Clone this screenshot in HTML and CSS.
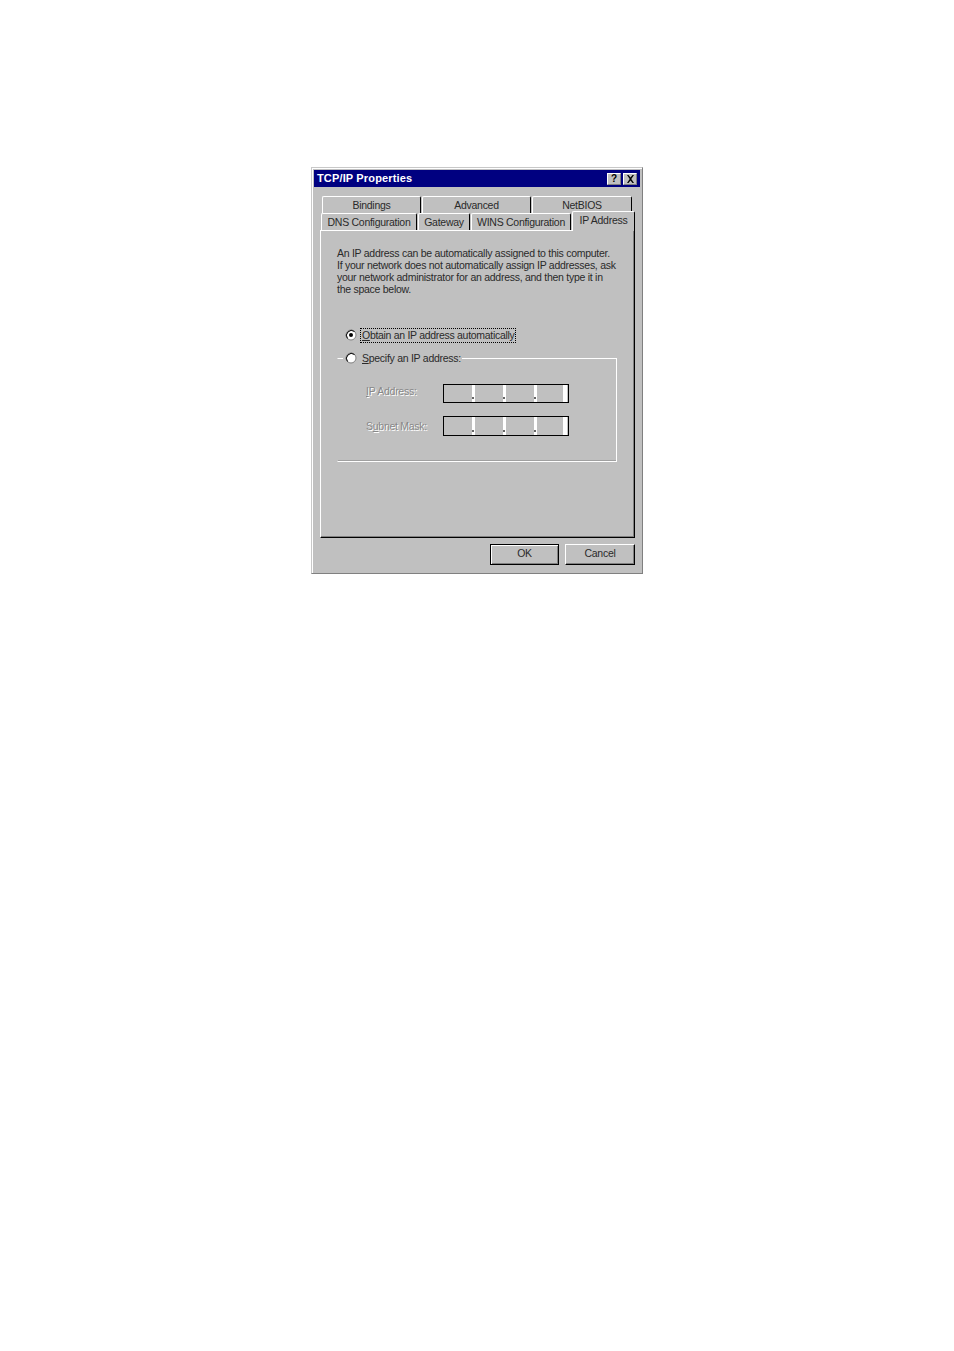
FILE: index.html
```html
<!DOCTYPE html>
<html lang="en">
<head>
<meta charset="utf-8">
<title>TCP/IP Properties</title>
<link rel="stylesheet" href="styles.css">
</head>
<body>
<div class="dialog">
  <div class="titlebar">
    <span class="title">TCP/IP Properties</span>
    <span class="tb-btn help">?</span>
    <span class="tb-btn close"><svg width="9" height="8" viewBox="0 0 9 8"><path d="M1 0h1.500L4.500 2.500 6.500 0H8L5.300 4 8 8H6.500L4.500 5.500 2.500 8H1L3.700 4z" fill="#000"/></svg></span>
  </div>
  <div class="tabs">
    <div class="tab-row rear">
      <div class="tab w-bind">Bindings</div>
      <div class="tab w-adv">Advanced</div>
      <div class="tab w-net">NetBIOS</div>
    </div>
    <div class="tab-row front">
      <div class="tab w-dns">DNS Configuration</div>
      <div class="tab w-gw">Gateway</div>
      <div class="tab w-wins">WINS Configuration</div>
      <div class="tab active">IP Address</div>
    </div>
  </div>
  <div class="panel">
    <p class="intro">An IP address can be automatically assigned to this computer.<br>If your network does not automatically assign IP addresses, ask<br>your network administrator for an address, and then type it in<br>the space below.</p>
    <div class="radio-row first">
      <svg class="radio" width="12" height="12" viewBox="0 0 12 12"><circle cx="6" cy="6" r="5" fill="#fff" stroke="#808080"/><path d="M2.500 9.500A5 5 0 0 1 9.500 2.500" fill="none" stroke="#000"/><circle cx="6" cy="6" r="2" fill="#000"/></svg>
      <span class="focus"><u>O</u>btain an IP address automatically</span>
    </div>
    <fieldset class="group">
      <legend class="radio-row">
        <svg class="radio" width="12" height="12" viewBox="0 0 12 12"><circle cx="6" cy="6" r="5" fill="#fff" stroke="#808080"/><path d="M2.500 9.500A5 5 0 0 1 9.500 2.500" fill="none" stroke="#000"/></svg>
        <span class="legend-text"><u>S</u>pecify an IP address:</span>
      </legend>
      <div class="field first-field">
        <span class="label raised"><u>I</u>P Address:</span>
        <div class="ip"><span class="seg"><i></i></span><span class="seg"><i></i></span><span class="seg"><i></i></span><span class="seg last"></span></div>
      </div>
      <div class="field">
        <span class="label"><span>S<u>u</u>bnet Mask:</span></span>
        <div class="ip tall"><span class="seg"><i></i></span><span class="seg"><i></i></span><span class="seg"><i></i></span><span class="seg last"></span></div>
      </div>
    </fieldset>
  </div>
  <div class="buttons">
    <button class="btn default">OK</button>
    <button class="btn cancel">Cancel</button>
  </div>
</div>
</body>
</html>
```

FILE: styles.css
```css
html, body { margin: 0; padding: 0; background: #fff; }
body { height: 1351px; overflow: hidden; font-family: "Liberation Sans", Arial, sans-serif; font-size: 10.5px; letter-spacing: -0.27px; color: #2a2a2a; }
.dialog {
  box-sizing: border-box;
  width: 332px;
  height: 407px;
  margin: 167px 0 0 311px;
  background: #c0c0c0;
  border: 1px solid #808080;
  border-top-color: #c8c8c8;
  border-left-color: #c8c8c8;
  box-shadow: inset 1px 1px 0 #fff;
  padding: 2px 2px 0 2px;
}
.titlebar {
  height: 17px;
  background: #000080;
  display: flex;
  align-items: center;
  gap: 2px;
  padding: 0 3px 0 3px;
}
.title { flex: 1; color: #fff; font-weight: bold; font-size: 11px; letter-spacing: 0.15px; margin-top: -1px; }
.tb-btn {
  box-sizing: border-box;
  width: 14px; height: 12px;
  background: #c0c0c0;
  border: 1px solid #808080;
  border-top-color: #fff; border-left-color: #fff;
  display: flex; align-items: center; justify-content: center;
  font-weight: bold; font-size: 10px; color: #000; line-height: 1;
}
.tabs { margin: 9px -1px 0 -1px; height: 34px; display: flex; flex-direction: column; }
.tab-row { display: flex; height: 17px; }
.rear { padding-left: 9px; gap: 1px; }
.front { padding-left: 8px; gap: 1px; }
.tab {
  box-sizing: border-box;
  height: 17px;
  border-top: 1px solid #fff;
  border-left: 1px solid #fff;
  border-right: 1px solid #000;
  border-radius: 2px 2px 0 0;
  text-align: center;
  line-height: 16px;
}
.w-bind { width: 99px; }
.w-adv { width: 109px; }
.w-net { width: 100px; }
.w-dns { width: 96px; }
.w-gw { width: 52px; }
.w-wins { width: 100px; }
.tab.active {
  width: 63px;
  height: 20px;
  margin-top: -2px;
  background: #c0c0c0;
  position: relative;
  z-index: 1;
  line-height: 17px;
}
.panel {
  box-sizing: border-box;
  width: 315px;
  height: 308px;
  margin-left: 6px;
  border: 1px solid #000;
  border-top-color: #fff;
  border-left-color: #fff;
  box-shadow: inset -1px -1px 0 #808080;
  padding: 16px 0 0 16px;
}
.intro { margin: 0; line-height: 12px; }
.radio-row { display: flex; align-items: center; gap: 5px; }
.radio-row.first { margin: 33px 0 0 8px; height: 14px; gap: 4px; letter-spacing: -0.3px; }
.focus { outline: 1px dotted #000; padding: 0 1px; line-height: 13px; }
.group {
  box-sizing: border-box;
  width: 280px;
  height: 110px;
  margin: 10px 0 0 0;
  padding: 0;
  border: 1px solid #fff;
  border-left-color: transparent;
  box-shadow: inset 0 -1px 0 #a0a0a0;
  min-width: 0;
}
.group legend { padding: 0 1px 0 2px; margin-left: 5px; height: 12px; }
.field { display: flex; align-items: center; margin-left: 28px; }
.first-field { margin-top: 20px; }
.field + .field { margin-top: 13px; }
.label { width: 77px; color: #888; text-shadow: 1px 1px 0 #fff; }
.raised { margin-top: -5px; }
.ip {
  box-sizing: border-box;
  width: 126px; height: 19px;
  border: 1px solid #000;
  display: flex;
}
.ip.tall { height: 20px; }
.seg {
  box-sizing: border-box;
  width: 31px;
  height: 100%;
  border-right: 3px solid #fff;
  position: relative;
}
.seg.last { width: 30px; border-right-width: 4px; }
.seg i {
  position: absolute;
  right: -2px; bottom: 3px;
  width: 2px; height: 2px;
  background: #666;
}
.buttons { display: flex; justify-content: flex-end; gap: 6px; margin: 6px 5px 0 0; }
.btn {
  box-sizing: border-box;
  height: 21px;
  margin: 0; padding: 0 0 3px;
  background: #c0c0c0;
  font: inherit;
  letter-spacing: inherit;
  color: #2a2a2a;
  border: 1px solid #000;
  border-top-color: #fff; border-left-color: #fff;
  box-shadow: inset -1px -1px 0 #808080;
}
.btn.default { width: 69px; border: 1px solid #000; box-shadow: inset 1px 1px 0 #fff, inset -1px -1px 0 #808080; }
.btn.cancel { width: 70px; }
```
